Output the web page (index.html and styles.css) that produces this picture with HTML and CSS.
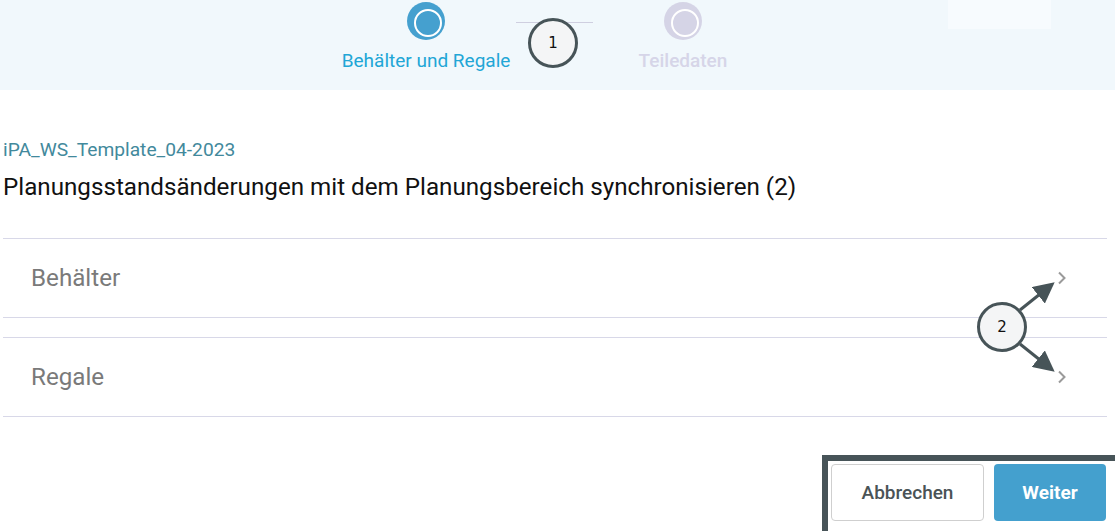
FILE: index.html
```html
<!DOCTYPE html>
<html lang="de">
<head>
<meta charset="utf-8">
<title>Synchronisieren</title>
<link rel="stylesheet" href="styles.css">
</head>
<body>
<header class="header">
  <div class="stepper">
    <div class="step step-active">
      <span class="step-dot"></span>
      <span class="step-label">Behälter und Regale</span>
    </div>
    <span class="step-line"></span>
    <div class="step step-next">
      <span class="step-dot"></span>
      <span class="step-label">Teiledaten</span>
    </div>
  </div>
  <div class="header-box"></div>
</header>

<main class="content">
  <div class="template">iPA_WS_Template_04-2023</div>
  <h1 class="title">Planungsstandsänderungen mit dem Planungsbereich synchronisieren (2)</h1>
  <div class="list">
    <div class="row">
      <span class="row-label">Behälter</span>
      <svg class="chev" width="10" height="14" viewBox="0 0 10 14"><path d="M2 1.5 L7.5 7 L2 12.5" fill="none" stroke="#9a9a9a" stroke-width="2"/></svg>
    </div>
    <div class="row">
      <span class="row-label">Regale</span>
      <svg class="chev" width="10" height="14" viewBox="0 0 10 14"><path d="M2 1.5 L7.5 7 L2 12.5" fill="none" stroke="#9a9a9a" stroke-width="2"/></svg>
    </div>
  </div>
</main>

<div class="actions-frame">
  <button class="btn btn-cancel">Abbrechen</button>
  <button class="btn btn-next">Weiter</button>
</div>

<div class="marker marker-1">1</div>
<div class="marker marker-2">2</div>
<svg class="arrows" width="1115" height="531" viewBox="0 0 1115 531">
  <defs>
    <marker id="ah" markerWidth="7" markerHeight="7" refX="5" refY="3.5" orient="auto" markerUnits="strokeWidth">
      <path d="M0 0 L7 3.5 L0 7 Z" fill="#475458"/>
    </marker>
  </defs>
  <line x1="1020" y1="310" x2="1050" y2="286" stroke="#475458" stroke-width="3" marker-end="url(#ah)"/>
  <line x1="1020" y1="344" x2="1050" y2="368" stroke="#475458" stroke-width="3" marker-end="url(#ah)"/>
</svg>
</body>
</html>
```

FILE: styles.css
```css
* { box-sizing: border-box; }
html, body { margin: 0; padding: 0; }
body {
  width: 1115px;
  height: 531px;
  overflow: hidden;
  background: #ffffff;
  font-family: Roboto, "Liberation Sans", Arial, sans-serif;
  position: relative;
}

.header {
  height: 90px;
  background: #f1f8fc;
  position: relative;
  display: flex;
  justify-content: center;
  padding-right: 6px;
}
.header-box {
  position: absolute;
  left: 948px;
  top: 0;
  width: 103px;
  height: 29px;
  background: #f7fbfe;
}
.stepper {
  display: flex;
  align-items: flex-start;
  padding-top: 2px;
}
.step {
  width: 170px;
  display: flex;
  flex-direction: column;
  align-items: center;
}
.step-dot {
  width: 38px;
  height: 38px;
  border-radius: 50%;
  position: relative;
}
.step-dot::after {
  content: "";
  position: absolute;
  left: 7px;
  top: 7px;
  width: 24px;
  height: 24px;
  border-radius: 50%;
  border: 2.5px solid #ffffff;
}
.step-active .step-dot { background: #45a0cf; }
.step-next .step-dot { background: #d5d4e6; }
.step-label {
  margin-top: 10px;
  font-size: 19px;
  line-height: 22px;
  white-space: nowrap;
}
.step-active .step-label { color: #21a6d6; }
.step-next .step-label { color: #d6d5e8; font-weight: 500; }
.step-line {
  width: 77px;
  height: 1px;
  background: #cfcfe0;
  margin: 20px 5px 0;
}

.content {
  padding: 49px 8px 0 3px;
}
.template {
  font-size: 19.2px;
  line-height: 22px;
  color: #42899c;
}
.title {
  margin: 12px 0 0;
  font-size: 24.2px;
  font-weight: 400;
  line-height: 28px;
  color: #111111;
}
.list {
  margin-top: 37px;
  display: flex;
  flex-direction: column;
  gap: 19px;
}
.row {
  height: 80px;
  border-top: 1px solid #d8d8e8;
  border-bottom: 1px solid #d8d8e8;
  display: flex;
  align-items: center;
  justify-content: space-between;
  padding: 0 40px 0 28px;
}
.row-label {
  font-size: 24.2px;
  color: #7a7a7a;
}
.chev { display: block; }

.actions-frame {
  position: absolute;
  left: 822px;
  top: 455px;
  width: 300px;
  height: 82px;
  border: 6px solid #475458;
  background: #ffffff;
  display: flex;
  align-items: flex-start;
  gap: 10px;
  padding: 3px 0 0 3px;
}
.btn {
  height: 57px;
  border-radius: 4px;
  font-family: Roboto, "Liberation Sans", Arial, sans-serif;
  font-size: 19px;
  cursor: pointer;
}
.btn-cancel {
  width: 153px;
  background: #ffffff;
  border: 1px solid #cfcfcf;
  color: #4a5356;
  font-weight: 500;
}
.btn-next {
  width: 112px;
  background: #44a0ce;
  border: none;
  color: #ffffff;
  font-weight: 700;
}

.marker {
  position: absolute;
  width: 50px;
  height: 50px;
  border-radius: 50%;
  border: 3px solid #475458;
  background: #f4f5f6;
  display: flex;
  align-items: center;
  justify-content: center;
  font-family: "DejaVu Sans", sans-serif;
  font-size: 15px;
  color: #111111;
}
.marker-1 { left: 528px; top: 18px; }
.marker-2 { left: 977px; top: 302px; }
.arrows {
  position: absolute;
  left: 0;
  top: 0;
  pointer-events: none;
}
```
